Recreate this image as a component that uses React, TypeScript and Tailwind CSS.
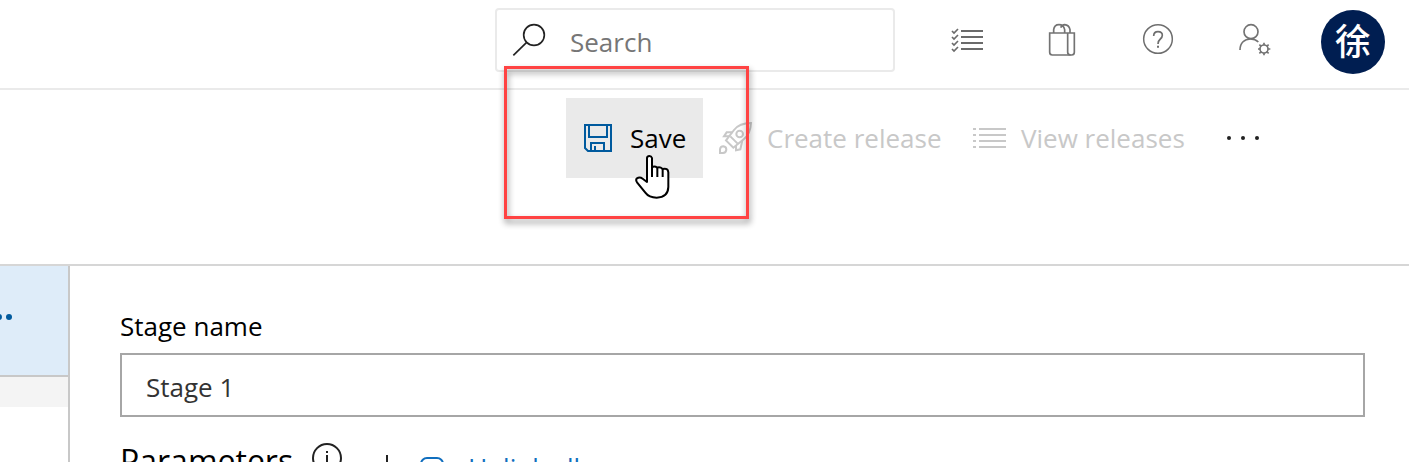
import React from "react";

function SearchIcon() {
  return (
    <svg viewBox="66 69 102 102" className="h-[34px] w-[34px] shrink-0" fill="none" stroke="#222" strokeWidth="5" aria-hidden="true">
      <circle cx="132" cy="105" r="31" />
      <path d="M110 127 70 166" />
    </svg>
  );
}

function TasksIcon() {
  return (
    <svg viewBox="33 42 96 96" className="h-8 w-8 overflow-visible" fill="none" stroke="#6b6b6b" strokeWidth="6" aria-hidden="true">
      <path d="M63 63H129M63 81H129M63 99H129M63 117H129" />
      <path strokeWidth="5" d="M36 63 42 69 54 57M36 81 42 87 54 75M36 99 42 105 54 93M36 117 42 123 54 111" />
    </svg>
  );
}

function BagIcon() {
  return (
    <svg viewBox="321 42 96 96" className="h-8 w-8 overflow-visible" fill="none" stroke="#737373" strokeWidth="5" aria-hidden="true">
      <path d="M329 69H403V127Q403 135 395 135H337Q329 135 329 127Z" />
      <path d="M383 69V127Q383 135 392 135" />
      <path d="M341 69V59Q343 44 357 44Q371 44 374 59V69M362 53Q366 44 374 44Q387 45 390 59V69" />
    </svg>
  );
}

function HelpIcon() {
  return (
    <svg viewBox="39 42 96 96" className="h-8 w-8 overflow-visible" fill="none" stroke="#6e6e6e" strokeWidth="4.5" aria-hidden="true">
      <circle cx="84" cy="87" r="43" />
      <path strokeWidth="5" d="M71 78Q71 65 84 65Q97 65 97 76Q97 82 91 87Q84 93 84 102" />
      <path strokeWidth="6" d="M84 107V113" />
    </svg>
  );
}

function UserSettingsIcon() {
  return (
    <svg viewBox="327 42 96 96" className="h-8 w-8 overflow-visible" fill="none" stroke="#737373" strokeWidth="5" aria-hidden="true">
      <circle cx="363" cy="65" r="21" />
      <path d="M330 120C330 98 344 87 361 87Q376 87 385 96" />
      <circle cx="402" cy="117" r="12" />
      <path d="M402 105V98M402 129V136M390 117H384M414 117H421M394 109 388 104M410 109 416 104M394 125 388 130M410 125 416 130" />
    </svg>
  );
}

function SaveIcon() {
  return (
    <svg viewBox="267 102 84 84" className="h-7 w-7 shrink-0" fill="none" stroke="#005a9e" strokeWidth="6" aria-hidden="true">
      <path d="M270 105H348V183H279L270 174Z" />
      <path d="M282 105V141H336V105M288 183V159H327V183M300 183V168" />
    </svg>
  );
}

function RocketIcon() {
  return (
    <svg viewBox="27 36 99 96" className="h-8 w-[33px] shrink-0 overflow-visible" fill="none" stroke="#c8c8c8" strokeWidth="6" aria-hidden="true">
      <path d="M123 39C96 39 82 47 72 60L48 91L70 113L101 88C116 76 122 62 123 39Z" />
      <circle cx="89" cy="72" r="10" />
      <path d="M68 67H50L42 79H57M97 91L91 118L78 121V107M61 79L83 101" />
      <path d="M30 129V118Q31 109 40 109Q49 110 49 119Q48 129 39 129Z" />
    </svg>
  );
}

function ListIcon() {
  return (
    <svg viewBox="39 36 99 96" className="h-8 w-[33px] shrink-0" fill="none" stroke="#c8c8c8" strokeWidth="6" aria-hidden="true">
      <path d="M57 57H138M57 75H138M57 93H138M57 111H138" />
      <path d="M39 57H48M39 75H48M39 93H48M39 111H48" />
    </svg>
  );
}

function PointerHand() {
  return (
    <svg
      viewBox="420 195 105 132"
      className="pointer-events-none absolute left-[69px] top-[57px] z-20 h-11 w-[35px]"
      fill="#fff"
      stroke="#000"
      strokeWidth="6"
      strokeLinejoin="round"
      aria-hidden="true"
    >
      <path d="M456 276V204Q457 198 463 198Q469 198 471 204V232Q478 227 487 233Q495 230 503 237Q519 233 520 247V291Q519 322 485 323Q462 323 451 308L426 277Q421 269 426 265Q434 259 443 266Z" />
      <path fill="none" d="M471 230V261M487 234V261M503 237V261" />
    </svg>
  );
}

const headerActions = [
  { label: "Work items", Icon: TasksIcon },
  { label: "Marketplace", Icon: BagIcon },
  { label: "Help", Icon: HelpIcon },
  { label: "User settings", Icon: UserSettingsIcon },
];

function Header() {
  return (
    <header className="flex h-[90px] shrink-0 items-start justify-end border-b-2 border-[#eaeaea] pr-6 pt-2">
      <label className="mr-6 flex h-16 w-[400px] items-center gap-6 rounded-[4px] border-2 border-[#eaeaea] pl-[15px]">
        <SearchIcon />
        <input
          type="search"
          aria-label="Search"
          placeholder="Search"
          className="w-full min-w-0 bg-transparent pt-1 outline-none placeholder:text-[#767676]"
        />
      </label>
      {headerActions.map(({ label, Icon }) => (
        <button key={label} type="button" aria-label={label} className="flex h-16 w-24 items-center justify-center">
          <Icon />
        </button>
      ))}
      <button
        type="button"
        className="ml-[18px] mt-[2px] flex h-16 w-16 items-center justify-center rounded-full bg-[#001e51] text-4xl font-medium text-white"
      >
        徐
      </button>
    </header>
  );
}

function Toolbar() {
  return (
    <div className="flex h-44 shrink-0 items-start justify-end border-b-2 border-[#d6d6d6] pr-[126px] pt-2">
      <div className="relative">
        <button type="button" className="flex h-20 w-[137px] items-center gap-[18px] bg-[#eaeaea] pl-[18px]">
          <SaveIcon />
          <span>Save</span>
        </button>
        <div className="pointer-events-none absolute -left-[62px] -top-8 z-10 h-[153px] w-[245px] border-3 border-[#ff4343] drop-shadow-[1px_4px_3px_rgba(0,0,0,0.45)]" />
        <PointerHand />
      </div>
      <button type="button" disabled className="flex h-20 w-[254px] items-center gap-[15px] pl-4 text-[#c8c8c8]">
        <RocketIcon />
        <span className="whitespace-nowrap">Create release</span>
      </button>
      <button type="button" disabled className="flex h-20 w-[246px] items-center gap-[15px] pl-4 text-[#c8c8c8]">
        <ListIcon />
        <span className="whitespace-nowrap">View releases</span>
      </button>
      <button type="button" aria-label="More actions" className="flex h-20 w-20 items-center justify-center gap-[10px] pr-[1px]">
        <span className="h-1 w-1 rounded-full bg-[#222]" />
        <span className="h-1 w-1 rounded-full bg-[#222]" />
        <span className="h-1 w-1 rounded-full bg-[#222]" />
      </button>
    </div>
  );
}

function Sidebar() {
  return (
    <aside className="w-[70px] shrink-0 border-r-2 border-[#c8c8c8]">
      <button type="button" aria-label="Stage options" className="flex h-[111px] w-full items-center gap-1 overflow-hidden border-b-2 border-[#c8c8c8] bg-[#deecf9] pb-[7px]">
        <span className="-ml-1 h-[6px] w-[6px] shrink-0 rounded-full bg-[#005a9e]" />
        <span className="h-[6px] w-[6px] shrink-0 rounded-full bg-[#005a9e]" />
      </button>
      <div className="h-[30px] bg-[#f4f4f4]" />
    </aside>
  );
}

function StageForm() {
  return (
    <main className="min-w-0 flex-1 pl-[50px] pr-11 pt-[42px]">
      <label htmlFor="stage-name" className="block leading-9">
        Stage name
      </label>
      <input
        id="stage-name"
        defaultValue="Stage 1"
        className="mt-[9px] h-16 w-full border-2 border-[#a6a6a6] bg-white px-6 pt-1 text-[#333] outline-none"
      />
      <div className="mt-6 flex items-start">
        <h2 className="text-[32px] leading-10">Parameters</h2>
        <svg viewBox="0 0 32 32" className="ml-[18px] mt-px h-8 w-8" fill="none" stroke="#222" strokeWidth="2" aria-hidden="true">
          <circle cx="16" cy="16" r="14" />
          <path d="M16 9V11M16 13V24" />
        </svg>
        <span className="ml-[43px] mt-[14px] h-7 w-[2px] bg-[#222]" />
        <a href="#unlink" className="ml-8 mt-[6px] flex items-center gap-6 leading-10 text-[#106ebe]">
          <svg viewBox="0 0 24 24" className="h-6 w-6 overflow-visible" fill="none" stroke="currentColor" strokeWidth="2" aria-hidden="true">
            <rect x="1" y="3" width="22" height="12" rx="6" />
            <path d="M8 20H17" />
          </svg>
          <span className="whitespace-nowrap">Unlink all</span>
        </a>
      </div>
    </main>
  );
}

export default function App() {
  return (
    <div className="flex h-screen flex-col overflow-hidden bg-white font-['Open_Sans','Noto_Sans_CJK_SC',sans-serif] text-[26px] text-black">
      <Header />
      <Toolbar />
      <div className="flex min-h-0 flex-1 overflow-hidden">
        <Sidebar />
        <StageForm />
      </div>
    </div>
  );
}
